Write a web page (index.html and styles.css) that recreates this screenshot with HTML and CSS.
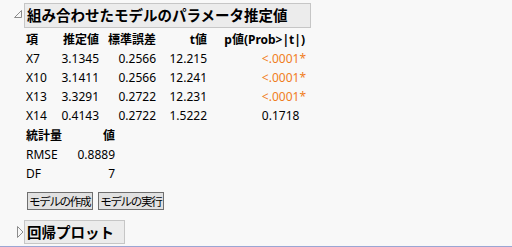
FILE: index.html
```html
<!DOCTYPE html>
<html lang="ja">
<head>
  <meta charset="UTF-8" />
  <title>組み合わせたモデルのパラメータ推定値</title>
  <link rel="stylesheet" href="styles.css">
</head>
<body>
  <div class="outline">
    <div class="outline-head open">
      <svg class="tri" width="10" height="10" viewBox="0 0 10 10"><polygon points="8.5,1.5 8.5,8.5 1.5,8.5" /></svg>
      <div class="title">組み合わせたモデルのパラメータ推定値</div>
    </div>
    <div class="report">
      <table class="params">
        <tr>
          <th class="c-item">項</th>
          <th class="c-est">推定値</th>
          <th class="c-se">標準誤差</th>
          <th class="c-t">t値</th>
          <th class="c-p">p値(Prob&gt;|t|)</th>
        </tr>
        <tr><td>X7</td><td>3.1345</td><td>0.2566</td><td>12.215</td><td class="sig">&lt;.0001*</td></tr>
        <tr><td>X10</td><td>3.1411</td><td>0.2566</td><td>12.241</td><td class="sig">&lt;.0001*</td></tr>
        <tr><td>X13</td><td>3.3291</td><td>0.2722</td><td>12.231</td><td class="sig">&lt;.0001*</td></tr>
        <tr><td>X14</td><td>0.4143</td><td>0.2722</td><td>1.5222</td><td>0.1718<span class="pad">*</span></td></tr>
      </table>
      <table class="stats">
        <tr><th class="c-name">統計量</th><th class="c-val">値</th></tr>
        <tr><td>RMSE</td><td>0.8889</td></tr>
        <tr><td>DF</td><td>7</td></tr>
      </table>
      <div class="buttons">
        <button>モデルの作成</button>
        <button>モデルの実行</button>
      </div>
    </div>
    <div class="outline-head closed">
      <svg class="tri" width="10" height="14" viewBox="0 0 10 14"><polygon points="2.5,1.5 8,7 2.5,12.5" /></svg>
      <div class="title">回帰プロット</div>
    </div>
  </div>
</body>
</html>
```
FILE: styles.css
```css
* { box-sizing: border-box; }
html, body { height: 247px; }
body {
  margin: 0; padding: 0;
  background: #f8f8f8;
  color: #000;
  font-family: "Noto Sans", "Noto Sans CJK JP", sans-serif;
  border-bottom: 1px solid #9ba6d4;
  overflow: hidden;
}

.outline { padding-top: 3px; }

.outline-head {
  display: flex; align-items: center;
}
.outline-head .tri {
  width: 10px; margin-left: 13px; margin-right: 1px;
}
.outline-head .tri polygon {
  fill: #f8f8f8; stroke: #8c8c8c; stroke-width: 1;
}
.outline-head .title {
  background: #ececec;
  border: 1px solid #c6c6c6;
  font-size: 14.5px; font-weight: bold;
  line-height: 23px; height: 25px;
  padding: 0 0 0 2px;
}
.outline-head.open .title { width: 287px; }
.outline-head.closed .title { width: 101px; height: 24px; line-height: 22px; }
.outline-head.open .tri { align-self: flex-start; margin-top: 6px; }

.report { padding: 2px 0 0 26px; }

table { border-collapse: collapse; font-size: 12px; }
th, td { padding: 0; height: 19px; line-height: 19px; white-space: nowrap; }
th { font-weight: bold; }

.params td, .params th { text-align: right; }
.params td:first-child, .params th:first-child { text-align: left; }
.params .c-item { width: 28px; }
.params .c-est { width: 45px; }
.params .c-se { width: 57px; }
.params .c-t { width: 51px; }
.params .c-p { width: 99px; }
.params th.c-p { padding-right: 1px; }
.params .sig { color: #f07d22; }
.params .pad { visibility: hidden; }

.stats { margin-top: 1px; }
.stats .c-name { width: 45px; text-align: left; }
.stats .c-val { width: 44px; }
.stats td:last-child, .stats th:last-child { text-align: right; }

.buttons { display: flex; gap: 5px; margin: 9px 0 0 1px; }
.buttons button {
  font-family: "Noto Sans CJK JP", sans-serif;
  font-size: 11.5px; letter-spacing: -1.3px;
  white-space: nowrap;
  height: 18px; line-height: 15px;
  padding: 0 2px 0 1px;
  background: #e1e1e1; color: #000;
  border: 1px solid #6f6f6f; border-radius: 0;
}

.outline-head.closed { margin-top: 10px; }
.outline-head.closed .tri { margin-left: 15px; margin-right: -1px; }
```
